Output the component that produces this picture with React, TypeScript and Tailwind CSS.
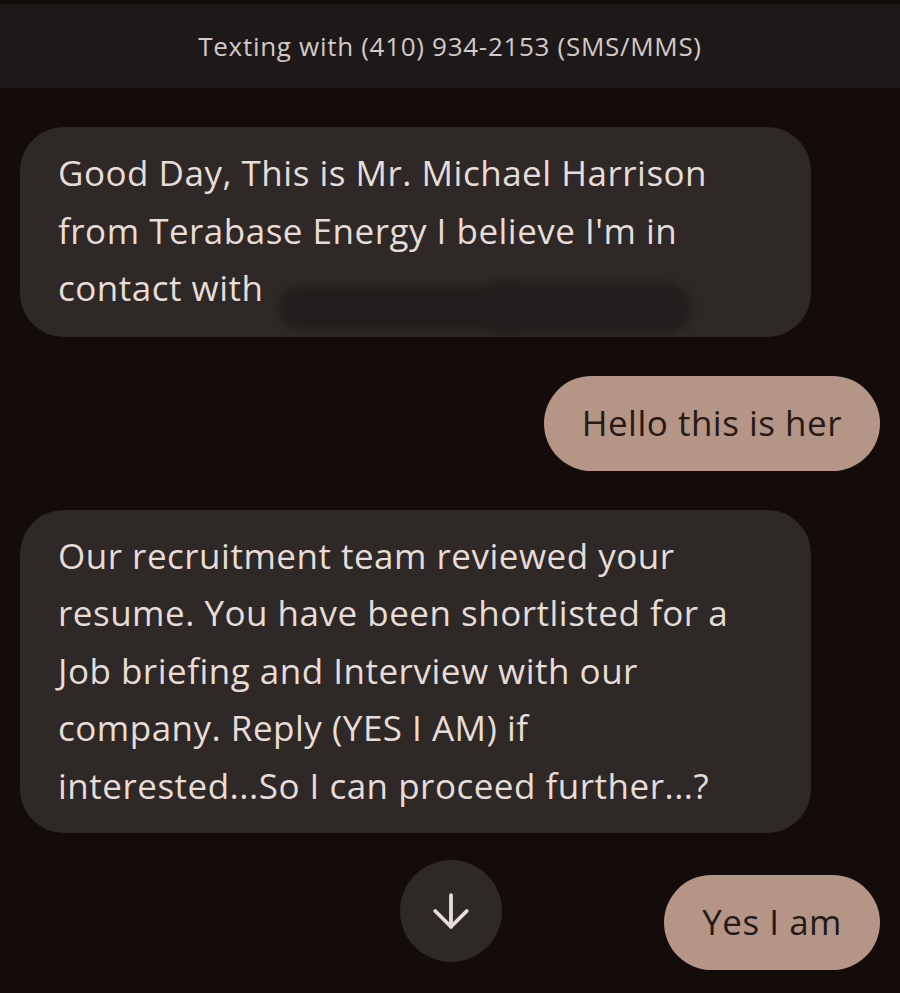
import { ArrowDown } from "lucide-react";

const sans = { fontFamily: '"Open Sans", "Noto Sans", sans-serif' };

function Incoming({ lines, children }: { lines: string[]; children?: React.ReactNode }) {
  return (
    <div className="flex justify-start pl-5">
      <div className="w-[791px] rounded-[44px] bg-[#2e2826] pl-[38px] pr-6 pt-[17px] pb-[19px] text-[35px] leading-[57.5px] tracking-[0.5px] text-[#e6dcd8]">
        {lines.map((l, i) => (
          <div key={i} className="whitespace-nowrap">
            {l}
            {i === lines.length - 1 && children}
          </div>
        ))}
      </div>
    </div>
  );
}

function Outgoing({ text }: { text: string }) {
  return (
    <div className="flex h-[95px] items-center rounded-full bg-[#b49586] px-[38px] text-[35px] tracking-[0.5px] text-[#261a16]">
      {text}
    </div>
  );
}

export default function App() {
  return (
    <div className="h-[993px] w-[900px] overflow-hidden bg-[#140c0b]" style={sans}>
      <div className="pt-1">
        <div className="flex h-[84px] items-center justify-center bg-[#1d1918] text-[26px] tracking-[0.7px] text-[#d3c9c6]">
          Texting with (410) 934-2153 (SMS/MMS)
        </div>
      </div>

      <div className="mt-[39px] flex flex-col">
        <Incoming
          lines={[
            "Good Day, This is Mr. Michael Harrison",
            "from Terabase Energy I believe I'm in",
            "contact with",
          ]}
        >
          <span className="relative ml-4 inline-block h-[52px] w-[412px] translate-y-[16px] align-middle">
            <span className="absolute left-0 top-[4px] h-[44px] w-[240px] rounded-full bg-[#231e1d] blur-[4px]" />
            <span className="absolute right-0 top-0 h-[52px] w-[210px] rounded-full bg-[#231e1d] blur-[4px]" />
          </span>
        </Incoming>

        <div className="mt-[39px] flex justify-end pr-5">
          <Outgoing text="Hello this is her" />
        </div>

        <div className="mt-[39px]">
          <Incoming
            lines={[
              "Our recruitment team reviewed your",
              "resume. You have been shortlisted for a",
              "Job briefing and Interview with our",
              "company. Reply (YES I AM) if",
              "interested...So I can proceed further...?",
            ]}
          />
        </div>

        <div className="mt-[42px] flex items-start justify-between pr-5">
          <div className="ml-[400px] -mt-[15px] flex h-[102px] w-[102px] items-center justify-center rounded-full bg-[#2e2826] text-[#e6dcd8]">
            <ArrowDown size={54} strokeWidth={1.7} />
          </div>
          <Outgoing text="Yes I am" />
        </div>
      </div>
    </div>
  );
}
